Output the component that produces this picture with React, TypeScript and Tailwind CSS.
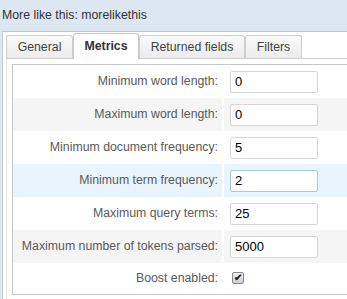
import React from "react";

const rows = [
  { label: "Minimum word length:", value: "0", bg: "bg-white" },
  { label: "Maximum word length:", value: "0", bg: "bg-[#f5f5f5]" },
  { label: "Minimum document frequency:", value: "5", bg: "bg-white" },
  { label: "Minimum term frequency:", value: "2", bg: "bg-[#eaf4fc]", focus: true },
  { label: "Maximum query terms:", value: "25", bg: "bg-white" },
  { label: "Maximum number of tokens parsed:", value: "5000", bg: "bg-[#f5f5f5]" },
];

const tabs = [
  { name: "General", w: "w-[67px]" },
  { name: "Metrics", w: "w-[66px]", active: true },
  { name: "Returned fields", w: "w-[106px]" },
  { name: "Filters", w: "w-[57px]" },
];

export default function App() {
  return (
    <div
      className="w-[347px] h-[299px] overflow-hidden bg-[#dde7f1] text-[12.3px]"
      style={{ fontFamily: '"Liberation Sans", Arial, sans-serif' }}
    >
      <div className="h-[31px] flex items-center pl-[2px] text-[#333]">
        More like this: morelikethis
      </div>
      <div className="ml-[2px] h-[268px] bg-white border-l border-t border-[#c9c9c9] pl-[3px] pt-[3px]">
        <div className="h-full border-l border-[#e2e2e2]">
          <div className="flex items-end h-[24px] border-b border-[#d0d0d0] -ml-px">
            {tabs.map((t) =>
              t.active ? (
                <div
                  key={t.name}
                  className={`${t.w} h-[26px] -mb-px bg-white border border-b-0 border-[#c8c8c8] rounded-t-[3px] flex items-center justify-center font-bold text-[#333]`}
                >
                  {t.name}
                </div>
              ) : (
                <div
                  key={t.name}
                  className={`${t.w} h-[23px] bg-gradient-to-b from-[#fafafa] to-[#ececec] border border-b-0 border-[#cfcfcf] rounded-t-[3px] flex items-center justify-center text-[#444]`}
                >
                  {t.name}
                </div>
              )
            )}
          </div>
          <div className="mt-[5px] ml-[5px] h-[231px] border-l-[1.5px] border-t border-b-[1.5px] border-[#c8c8c8]">
            {rows.map((r) => (
              <div key={r.label} className={`flex h-[33px] ${r.bg}`}>
                <div className="w-[209px] flex items-center justify-end pr-[4px] text-[#5a5a5a]">
                  {r.label}
                </div>
                <div className="w-[2px] bg-white" />
                <div className="flex-1 flex items-center pl-[6px]">
                  <div
                    className={`w-[88px] h-[22px] bg-white border rounded-[2px] flex items-center pl-[4px] text-[13px] text-black ${
                      r.focus ? "border-[#a9c8e8]" : "border-[#d6d6d6]"
                    }`}
                  >
                    {r.value}
                  </div>
                </div>
              </div>
            ))}
            <div className="flex h-[30px] bg-white">
              <div className="w-[209px] flex items-center justify-end pr-[4px] text-[#5a5a5a]">
                Boost enabled:
              </div>
              <div className="w-[2px]" />
              <div className="flex-1 flex items-center pl-[8px]">
                <span className="w-[12px] h-[12px] rounded-[2px] border border-[#8a8a8a] bg-gradient-to-b from-[#f0f0f0] to-[#cfcfcf] flex items-center justify-center text-[10px] font-bold leading-none text-[#222]">
                  ✔
                </span>
              </div>
            </div>
          </div>
        </div>
      </div>
    </div>
  );
}
